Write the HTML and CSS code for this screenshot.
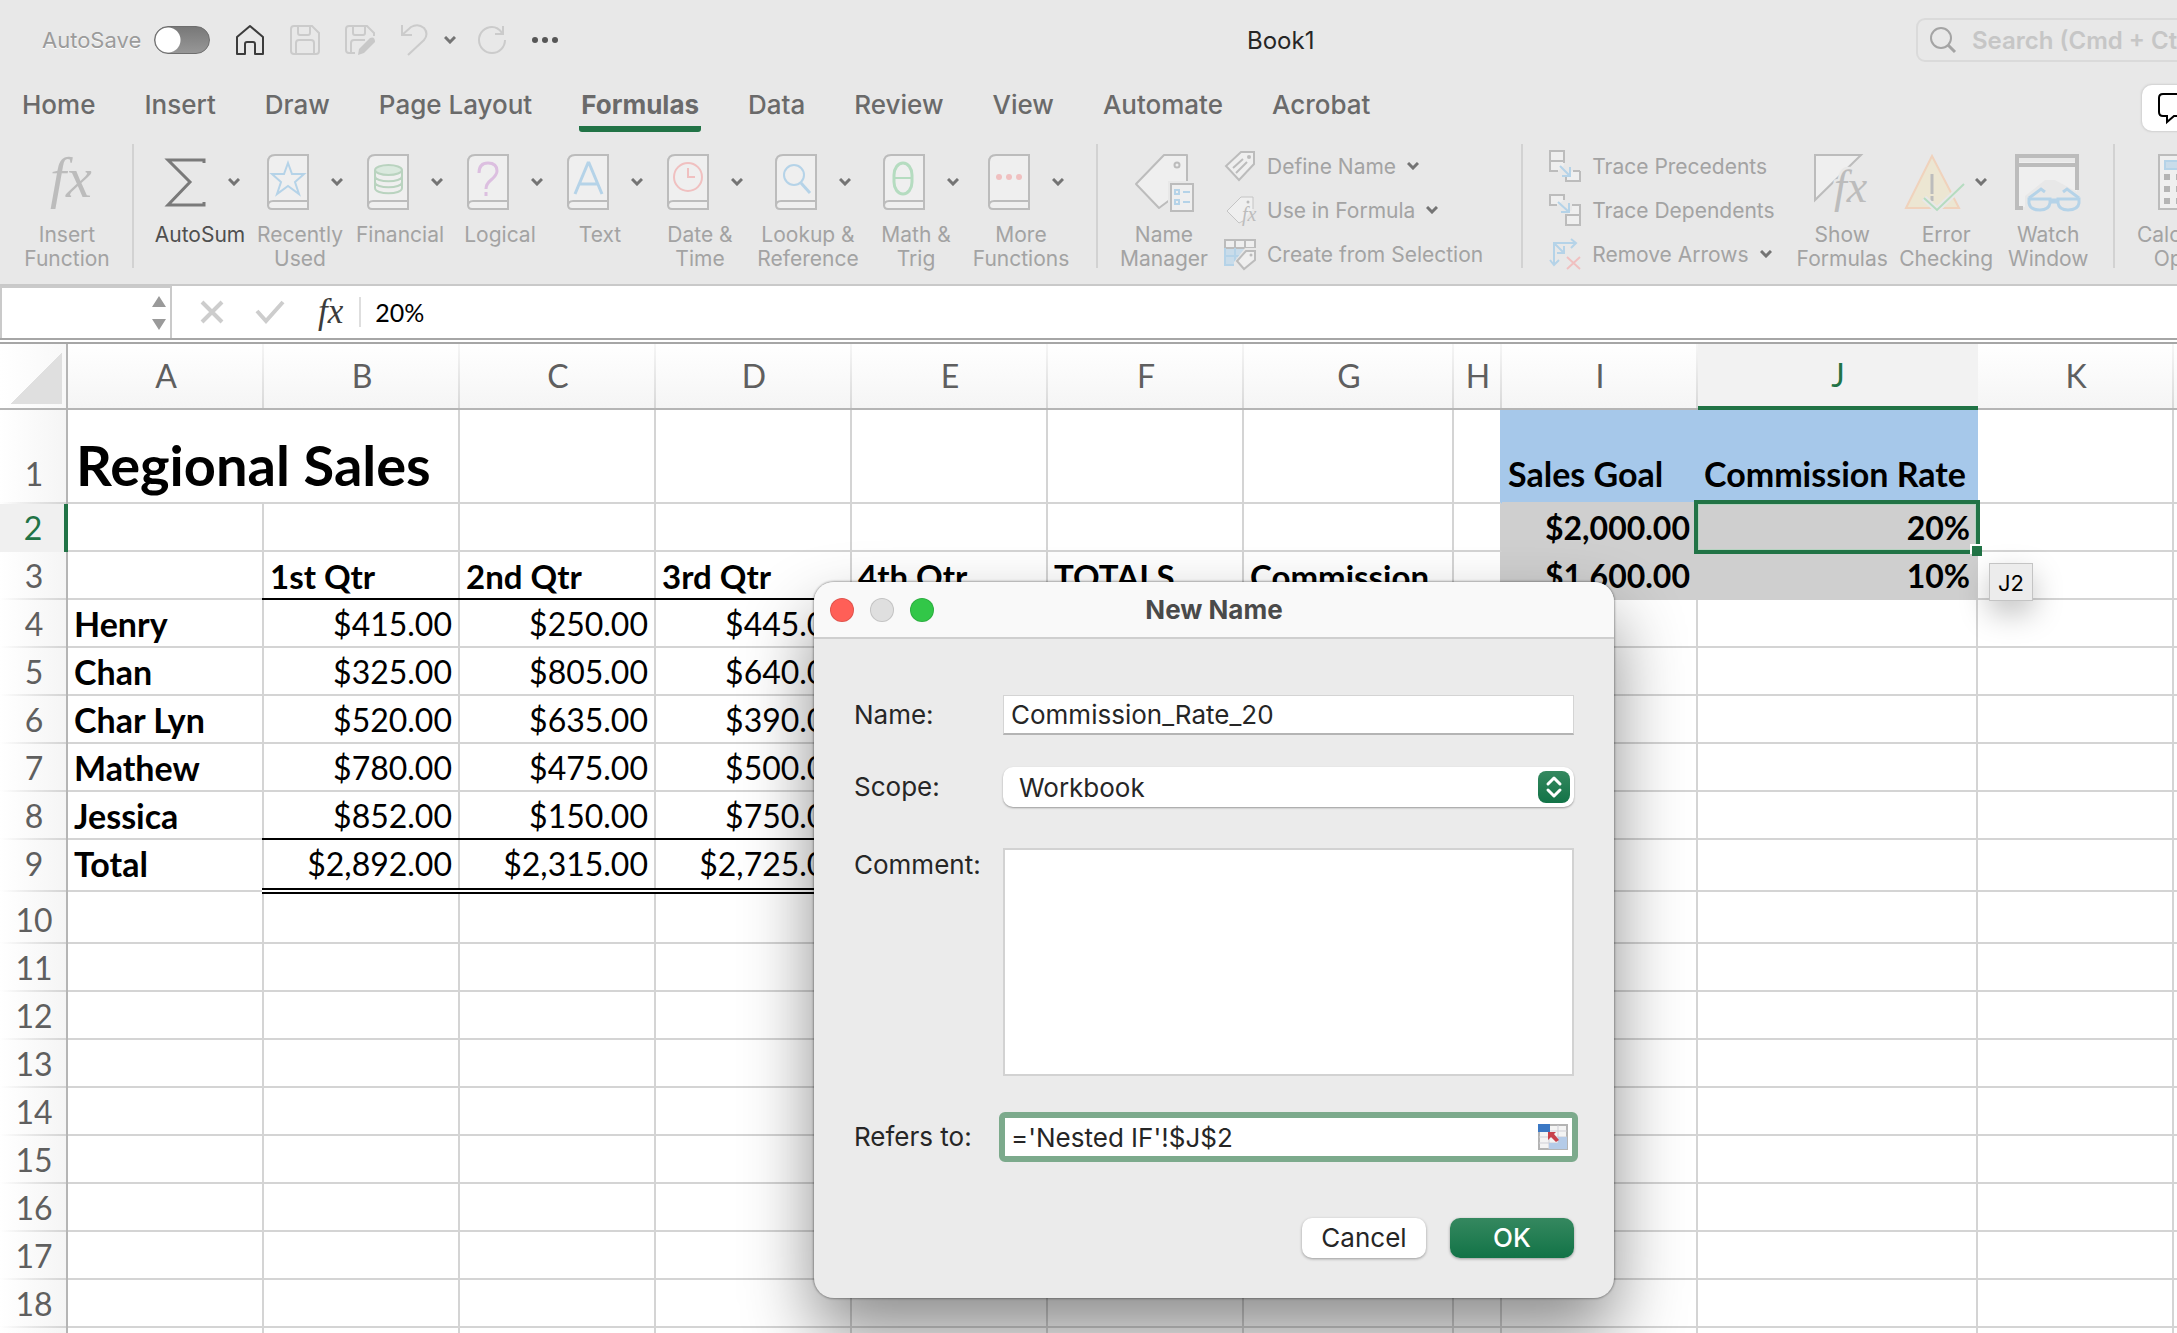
FILE: index.html
```html
<!DOCTYPE html>
<html lang="en">
<head>
    <meta charset="UTF-8">
    <meta name="viewport" content="width=device-width, initial-scale=1.0">
    <title>Book1</title>
    <link rel="stylesheet" href="styles.css">
</head>
<body>
    <svg class="defs" aria-hidden="true">
        <symbol id="book" viewBox="0 0 42 56">
            <path d="M41 1H8Q1 1 1 8V51Q1 55 5 55H41Z" fill="#efefef" stroke="#bcbcbc" stroke-width="2"/>
            <path d="M41 47H6Q1 47 1 52" fill="none" stroke="#bcbcbc" stroke-width="2"/>
        </symbol>
        <symbol id="chev" viewBox="0 0 12 8">
            <path d="M1 1L6 6L11 1" fill="none" stroke="#747474" stroke-width="3"/>
        </symbol>
    </svg>

    <header class="app-head">
        <div class="titlebar">
            <div class="quick">
                <label class="autosave" for="autosave">AutoSave</label>
                <input type="checkbox" id="autosave" class="toggle">
                <button class="icon-btn home" aria-label="Home"><svg width="30" height="32" viewBox="0 0 30 32"><path d="M2 30V13L15 2L28 13V30H20V20Q20 18 18 18H12Q10 18 10 20V30Z" fill="none" stroke="#3c3c3c" stroke-width="2" stroke-linejoin="round"/></svg></button>
                <button class="icon-btn" aria-label="Save"><svg width="30" height="30" viewBox="0 0 30 30"><path d="M4 1H22L29 8V26Q29 29 26 29H4Q1 29 1 26V4Q1 1 4 1ZM8 1V8Q8 10 10 10H18Q20 10 20 8V1M6 29V18Q6 15 9 15H21Q24 15 24 18V29" fill="none" stroke="#cbcbcb" stroke-width="2"/></svg></button>
                <button class="icon-btn" aria-label="Save As"><svg width="30" height="30" viewBox="0 0 30 30"><path d="M10 28H4Q1 28 1 25V4Q1 1 4 1H22L29 8V11M8 1V8Q8 10 10 10H18Q20 10 20 8V1M6 28V18Q6 15 9 15H20" fill="none" stroke="#cbcbcb" stroke-width="2"/><path d="M25 13Q30 11 30 17L19 28L13 30L14 24Z" fill="#c8c8c8"/></svg></button>
                <button class="icon-btn" aria-label="Undo"><svg width="30" height="32" viewBox="0 0 30 32"><path d="M2 1V11H12M2 11L11 3Q18 -1 24 4Q29 10 24 16L8 31" fill="none" stroke="#cbcbcb" stroke-width="2"/></svg></button>
                <button class="icon-btn tight" aria-label="Undo list"><svg width="12" height="8"><use href="#chev"/></svg></button>
                <button class="icon-btn" aria-label="Redo"><svg width="30" height="30" viewBox="0 0 30 30"><path d="M26 1V9H18M25 8Q21 2 15 2A13 13 0 1 0 28 15" fill="none" stroke="#cbcbcb" stroke-width="2"/></svg></button>
                <button class="icon-btn" aria-label="More"><svg width="26" height="8" viewBox="0 0 26 8"><circle cx="3" cy="4" r="3" fill="#555"/><circle cx="13" cy="4" r="3" fill="#555"/><circle cx="23" cy="4" r="3" fill="#555"/></svg></button>
            </div>
            <h1 class="doc-name">Book1</h1>
            <div class="search">
                <svg width="26" height="26" viewBox="0 0 26 26"><circle cx="11" cy="11" r="10" fill="none" stroke="#a4a4a4" stroke-width="2"/><path d="M18 18L25 25" stroke="#a4a4a4" stroke-width="3"/></svg>
                <input type="text" aria-label="Search" placeholder="Search (Cmd + Ctrl + U)">
            </div>
        </div>

        <nav class="tabs">
            <a href="#">Home</a>
            <a href="#">Insert</a>
            <a href="#">Draw</a>
            <a href="#">Page Layout</a>
            <a href="#" class="active">Formulas</a>
            <a href="#">Data</a>
            <a href="#">Review</a>
            <a href="#">View</a>
            <a href="#">Automate</a>
            <a href="#">Acrobat</a>
            <button class="comments" aria-label="Comments"><svg width="40" height="30" viewBox="0 0 40 30"><path d="M5 1H36Q39 1 39 4V20Q39 23 36 23H16L9 29V23H5Q1 23 1 19V5Q1 1 5 1Z" fill="none" stroke="#000" stroke-width="2"/></svg></button>
        </nav>

        <div class="ribbon">
            <div class="group first">
                <button class="big">
                    <span class="pic"><svg width="50" height="56" viewBox="0 0 50 56"><text x="8" y="43" class="fx-art" font-size="58">fx</text></svg></span>
                    <span class="cap">Insert<br>Function</span>
                </button>
            </div>
            <div class="group library">
                <button class="big drop on">
                    <span class="pic"><svg width="42" height="56" viewBox="0 0 42 56"><path d="M40 9V6H4L26 28L4 51H40V48" fill="none" stroke="#7a7a7a" stroke-width="3"/></svg><svg width="12" height="8"><use href="#chev"/></svg></span>
                    <span class="cap">AutoSum</span>
                </button>
                <button class="big drop">
                    <span class="pic"><svg width="42" height="56" viewBox="0 0 42 56"><use href="#book"/><path d="M21 9L25 20H37L28 28L32 40L21 32L10 40L14 28L5 20H17Z" fill="none" stroke="#b5d3e8" stroke-width="2"/></svg><svg width="12" height="8"><use href="#chev"/></svg></span>
                    <span class="cap">Recently<br>Used</span>
                </button>
                <button class="big drop">
                    <span class="pic"><svg width="42" height="56" viewBox="0 0 42 56"><use href="#book"/><path d="M8 16V34C8 41 35 41 35 34V16M8 22C8 29 35 29 35 22M8 28C8 35 35 35 35 28" fill="none" stroke="#b9d3bf" stroke-width="2"/><ellipse cx="21.500" cy="16" rx="13.500" ry="5" fill="#dae9de" stroke="#b9d3bf" stroke-width="2"/></svg><svg width="12" height="8"><use href="#chev"/></svg></span>
                    <span class="cap">Financial</span>
                </button>
                <button class="big drop">
                    <span class="pic"><svg width="42" height="56" viewBox="0 0 42 56"><use href="#book"/><path d="M12 19Q12 9 21 9Q30 9 30 17Q30 21 24 26Q19 30 19 35M19 38V42" fill="none" stroke="#dcbfe0" stroke-width="3"/></svg><svg width="12" height="8"><use href="#chev"/></svg></span>
                    <span class="cap">Logical</span>
                </button>
                <button class="big drop">
                    <span class="pic"><svg width="42" height="56" viewBox="0 0 42 56"><use href="#book"/><path d="M8 40L21 9H22L35 40M12 30H31" fill="none" stroke="#b5d3e8" stroke-width="3"/></svg><svg width="12" height="8"><use href="#chev"/></svg></span>
                    <span class="cap">Text</span>
                </button>
                <button class="big drop">
                    <span class="pic"><svg width="42" height="56" viewBox="0 0 42 56"><use href="#book"/><circle cx="21" cy="23" r="14" fill="none" stroke="#f0c0c0" stroke-width="2"/><path d="M21 14V23H28" fill="none" stroke="#f0c0c0" stroke-width="2"/></svg><svg width="12" height="8"><use href="#chev"/></svg></span>
                    <span class="cap">Date &amp;<br>Time</span>
                </button>
                <button class="big drop lookup">
                    <span class="pic"><svg width="42" height="56" viewBox="0 0 42 56"><use href="#book"/><circle cx="19" cy="21" r="10" fill="none" stroke="#b5d3e8" stroke-width="2"/><path d="M26 29L35 39" stroke="#b5d3e8" stroke-width="3"/></svg><svg width="12" height="8"><use href="#chev"/></svg></span>
                    <span class="cap">Lookup &amp;<br>Reference</span>
                </button>
                <button class="big drop">
                    <span class="pic"><svg width="42" height="56" viewBox="0 0 42 56"><use href="#book"/><rect x="11" y="9" width="18" height="31" rx="9" ry="12" fill="none" stroke="#b5dcc0" stroke-width="3"/><path d="M11 24H29" stroke="#b5dcc0" stroke-width="2"/></svg><svg width="12" height="8"><use href="#chev"/></svg></span>
                    <span class="cap">Math &amp;<br>Trig</span>
                </button>
                <button class="big drop more">
                    <span class="pic"><svg width="42" height="56" viewBox="0 0 42 56"><use href="#book"/><circle cx="11" cy="23" r="3" fill="#f0c0c0"/><circle cx="21" cy="23" r="3" fill="#f0c0c0"/><circle cx="31" cy="23" r="3" fill="#f0c0c0"/></svg><svg width="12" height="8"><use href="#chev"/></svg></span>
                    <span class="cap">More<br>Functions</span>
                </button>
            </div>
            <div class="group names">
                <button class="big">
                    <span class="pic"><svg width="60" height="60" viewBox="0 0 60 60"><path d="M30 3H53V35L25 56L2 32Z" fill="#efefef" stroke="#bcbcbc" stroke-width="2" stroke-linejoin="round"/><circle cx="43" cy="13" r="2.500" fill="none" stroke="#bcbcbc" stroke-width="2"/><rect x="34" y="29" width="26" height="31" fill="#e8e8e8"/><rect x="37" y="32" width="22" height="27" fill="#efefef" stroke="#bcbcbc" stroke-width="2"/><path d="M41 38H45V42H41ZM41 48H45V52H41ZM49 40H56M49 50H56" fill="none" stroke="#b5d3e8" stroke-width="2"/></svg></span>
                    <span class="cap">Name<br>Manager</span>
                </button>
                <div class="stack">
                    <button class="small"><svg width="32" height="32" viewBox="0 0 32 32"><path d="M17 2H30V14L15 30L2 16Z" fill="#efefef" stroke="#bcbcbc" stroke-width="2"/><path d="M9 18L19 9M12 23L23 12" stroke="#bcbcbc" stroke-width="2"/><circle cx="25" cy="7" r="2" fill="#bcbcbc"/></svg>Define Name<svg width="12" height="8"><use href="#chev"/></svg></button>
                    <button class="small"><svg width="32" height="32" viewBox="0 0 32 32"><path d="M19 27L15 29L3 17L17 3H29V15" fill="#efefef" stroke="#c4c4c4" stroke-width="1"/><circle cx="24" cy="8" r="1.500" fill="#bcbcbc"/><text x="18" y="27" class="fx-art" font-size="20">fx</text></svg>Use in Formula<svg width="12" height="8"><use href="#chev"/></svg></button>
                    <button class="small"><svg width="32" height="32" viewBox="0 0 32 32"><rect x="1" y="2" width="30" height="25" fill="#efefef"/><path d="M1 10H20V27H1Z" fill="#c9dcea"/><path d="M1 10V2H31V12M11 2V10M21 2V10M1 10H31" fill="none" stroke="#bcbcbc" stroke-width="2"/><path d="M1 10V27H13M1 18H18M11 10V27" fill="none" stroke="#b5d3e8" stroke-width="2"/><path d="M21 10H32V32H10V24Z" fill="#e8e8e8"/><path d="M22 13H31V22L20 31L13 23Z" fill="#efefef" stroke="#bcbcbc" stroke-width="2"/><circle cx="27" cy="17" r="1.500" fill="#bcbcbc"/></svg>Create from Selection</button>
                </div>
            </div>
            <div class="group audit">
                <div class="stack">
                    <button class="small"><svg width="32" height="32" viewBox="0 0 32 32"><path d="M1 1H15V11H1ZM1 11V21H9L15 15V11M31 21V31H17V27L23 21Z" fill="#efefef"/><path d="M1 1H15V11H1ZM1 11V21H9M31 21V31H17V27M24 21H31M15 11V13" fill="none" stroke="#bcbcbc" stroke-width="2"/><path d="M11 16L21 26M21 17V26H13" fill="none" stroke="#b5d3e8" stroke-width="2"/></svg>Trace Precedents</button>
                    <button class="small"><svg width="32" height="32" viewBox="0 0 32 32"><path d="M1 1H15V6L8 11H1ZM23 11H31V31H17V21L23 16Z" fill="#efefef"/><path d="M8 11H1V1H15V6M17 21H31V31H17ZM23 11H31V21" fill="none" stroke="#bcbcbc" stroke-width="2"/><path d="M9 8L20 18M20 9V18H12" fill="none" stroke="#b5d3e8" stroke-width="2"/></svg>Trace Dependents</button>
                    <button class="small"><svg width="32" height="32" viewBox="0 0 32 32"><path d="M5 27V5H26M22 1L27 5L22 10M1 22L5 27L10 22M6 6L15 15M15 8V15H8" fill="none" stroke="#b5d3e8" stroke-width="2"/><path d="M18 19L31 31M31 19L18 31" stroke="#f0c0c0" stroke-width="2"/></svg>Remove Arrows<svg width="12" height="8"><use href="#chev"/></svg></button>
                </div>
                <button class="big show">
                    <span class="pic"><svg width="56" height="60" viewBox="0 0 56 60"><path d="M1 3H47L1 48Z" fill="#efefef" stroke="#bcbcbc" stroke-width="2"/><text x="20" y="50" class="fx-art halo" font-size="46">fx</text></svg></span>
                    <span class="cap">Show<br>Formulas</span>
                </button>
                <button class="big drop error">
                    <span class="pic"><svg width="60" height="60" viewBox="0 0 60 60"><path d="M27 4L54 56H1Z" fill="#ece6d2" stroke="#f0d2bc" stroke-width="2"/><path d="M27 22V42M27 44V49" stroke="#bcbcbc" stroke-width="3"/><path d="M19 46L32 58L59 32" fill="none" stroke="#e8e8e8" stroke-width="6"/><path d="M19 46L32 58L59 32" fill="none" stroke="#b5dcc0" stroke-width="2"/></svg><svg width="12" height="8"><use href="#chev"/></svg></span>
                    <span class="cap">Error<br>Checking</span>
                </button>
                <button class="big watch">
                    <span class="pic"><svg width="66" height="60" viewBox="0 0 66 60"><path d="M2 10H62V55H2Z" fill="#efefef"/><path d="M8 56H2V4H62V38M2 13H62" fill="none" stroke="#bcbcbc" stroke-width="4"/><path d="M10 60V44L30 28H40L66 42V60Z" fill="#e8e8e8"/><path d="M14 46L26 37L30 40M64 46L52 37L48 40" fill="none" stroke="#b5d3e8" stroke-width="3"/><path d="M14 47H35V51Q34 58 25 58Q15 58 14 51ZM43 47H64V51Q63 58 53 58Q44 58 43 51Z" fill="#e8e8e8" stroke="#b5d3e8" stroke-width="3"/><path d="M35 49H43" stroke="#b5d3e8" stroke-width="5"/></svg></span>
                    <span class="cap">Watch<br>Window</span>
                </button>
            </div>
            <div class="group calc">
                <button class="big drop">
                    <span class="pic"><svg width="44" height="56" viewBox="0 0 44 56"><rect x="1" y="1" width="42" height="54" fill="#efefef" stroke="#bcbcbc" stroke-width="2"/><rect x="7" y="7" width="30" height="8" fill="#c9dcea" stroke="#b5d3e8" stroke-width="2"/><path d="M6 23H12M18 23H24M30 23H36M6 35H12M18 35H24M30 35H36M6 47H12M18 47H24M30 47H36" stroke="#b4b4b4" stroke-width="6"/></svg><svg width="12" height="8"><use href="#chev"/></svg></span>
                    <span class="cap">Calculation<br>Options</span>
                </button>
            </div>
        </div>
    </header>

    <div class="formula-bar">
        <div class="name-box">
            <input type="text" aria-label="Name box">
            <svg width="14" height="34" viewBox="0 0 14 34"><path d="M7 0L14 11H0ZM7 34L14 23H0Z" fill="#9a9a9a"/></svg>
        </div>
        <button class="icon-btn" aria-label="Cancel entry"><svg width="24" height="24" viewBox="0 0 24 24"><path d="M2 2L22 22M22 2L2 22" stroke="#cdcdcd" stroke-width="4"/></svg></button>
        <button class="icon-btn" aria-label="Accept entry"><svg width="28" height="24" viewBox="0 0 28 24"><path d="M1 11L10 21L27 2" fill="none" stroke="#cdcdcd" stroke-width="4"/></svg></button>
        <button class="icon-btn fx">fx</button>
        <input type="text" class="formula" aria-label="Formula" value="20%">
    </div>

    <main class="sheet">
        <table id="grid"></table>
        <div class="cell-tip">J2</div>
    </main>

    <form class="dialog" role="dialog" aria-labelledby="dlg-title">
        <div class="dlg-head">
            <span class="light red"></span>
            <span class="light off"></span>
            <span class="light green"></span>
            <h2 id="dlg-title">New Name</h2>
        </div>
        <div class="dlg-body">
            <label for="nm">Name:</label>
            <input type="text" id="nm" class="field" value="Commission_Rate_20">

            <label for="scope">Scope:</label>
            <div class="pick">
                <select id="scope">
                    <option>Workbook</option>
                </select>
                <svg class="knob" width="32" height="32" viewBox="0 0 32 32"><path d="M10 13L16 7L22 13M10 19L16 25L22 19" fill="none" stroke="#fff" stroke-width="3" stroke-linecap="round" stroke-linejoin="round"/></svg>
            </div>

            <label for="comment" class="top">Comment:</label>
            <textarea id="comment"></textarea>

            <label for="refers">Refers to:</label>
            <div class="refers">
                <input type="text" id="refers" value="='Nested IF'!$J$2">
                <svg width="30" height="26" viewBox="0 0 30 26"><rect x="1" y="1" width="28" height="24" fill="#f4f4f4" stroke="#b4b4b4" stroke-width="2"/><path d="M1 13H29M1 19H29M11 1V25M20 1V25M1 7H29" stroke="#cfcfd6" stroke-width="1"/><rect width="12" height="8" fill="#3b78c4"/><path d="M11 19H20V13H29V25H11Z" fill="#b4cbe8"/><path d="M10 8H18L16 10L21 16L18 18L13 13L10 16Z" fill="#c8404a"/></svg>
            </div>
        </div>
        <div class="dlg-foot">
            <button type="button" class="btn">Cancel</button>
            <button type="button" class="btn ok">OK</button>
        </div>
    </form>

    <script>
        const cols = "ABCDEFGHIJKL".split("");
        const grid = document.getElementById("grid");

        const cells = {
            A1: "Regional Sales", I1: "Sales Goal", J1: "Commission Rate",
            I2: "$2,000.00", J2: "20%",
            B3: "1st Qtr", C3: "2nd Qtr", D3: "3rd Qtr", E3: "4th Qtr", F3: "TOTALS", G3: "Commission",
            I3: "$1,600.00", J3: "10%",
            A4: "Henry", B4: "$415.00", C4: "$250.00", D4: "$445.00",
            A5: "Chan", B5: "$325.00", C5: "$805.00", D5: "$640.00",
            A6: "Char Lyn", B6: "$520.00", C6: "$635.00", D6: "$390.00",
            A7: "Mathew", B7: "$780.00", C7: "$475.00", D7: "$500.00",
            A8: "Jessica", B8: "$852.00", C8: "$150.00", D8: "$750.00",
            A9: "Total", B9: "$2,892.00", C9: "$2,315.00", D9: "$2,725.00"
        };

        function addCell(row, tag, text, classes) {
            const cell = document.createElement(tag);
            cell.textContent = text;
            cell.className = classes.join(" ");
            row.appendChild(cell);
            return cell;
        }

        function addHeader() {
            const row = grid.insertRow();
            row.className = "letters";
            addCell(row, "th", "", ["corner"]);
            cols.forEach(function (c) {
                addCell(row, "th", c, ["col-" + c]);
            });
        }

        function addRow(n) {
            const row = grid.insertRow();
            row.className = "r" + n;
            addCell(row, "th", n, ["num"]);
            cols.forEach(function (c) {
                if (n === 1 && c === "B") return; // the title runs over A and B
                const text = cells[c + n] || "";
                const classes = [];
                if (/^[$\d].*[\d%]$/.test(text)) classes.push("right");
                if (c === "A" || n === 1) classes.push("label");
                if (n === 3 && c < "H") classes.push("heading");
                if ((c === "I" || c === "J") && n < 4) classes.push("bold", n === 1 ? "blue" : "gray");
                if (c === "H" && n < 4) classes.push(n === 1 ? "edge-blue" : "edge-gray");
                if (c > "A" && c < "H") {
                    if (n === 3 || n === 8) classes.push("rule");
                    if (n === 9) classes.push("total");
                }
                const cell = addCell(row, "td", text, classes);
                if (n === 1 && c === "A") {
                    cell.colSpan = 2;
                    cell.classList.add("title");
                }
                if (n === 2 && c === "J") cell.classList.add("selected");
            });
        }

        addHeader();
        for (let n = 1; n <= 19; n++) addRow(n);
    </script>
</body>
</html>
```
FILE: styles.css
```css
*, *::before, *::after {
    box-sizing: border-box;
}
body {
    margin: 0;
    height: 100vh;
    overflow: hidden;
    position: relative;
    display: flex;
    flex-direction: column;
    background-color: white;
    font-family: Inter, "Liberation Sans", sans-serif;
    color: #262626;
}
button, input, select, textarea {
    font: inherit;
    color: inherit;
    padding: 0;
    border: none;
    background: none;
}
svg {
    display: block;
    flex: none;
    overflow: visible;
}
.defs {
    position: absolute;
    width: 0;
    height: 0;
}
.fx-art {
    font-family: "Liberation Serif", serif;
    font-style: italic;
    fill: #bcbcbc;
}
.halo {
    stroke: #e8e8e8;
    stroke-width: 5px;
    paint-order: stroke;
}

/* title bar */
.app-head {
    flex: none;
    overflow: hidden;
    background-color: #e8e8e8;
    border-bottom: 2px solid #c9c9c9;
}
.titlebar {
    display: grid;
    grid-template-columns: minmax(0, 1247fr) minmax(0, 669fr) minmax(0, 261fr);
    align-items: center;
    height: 80px;
}
.quick {
    display: flex;
    align-items: center;
    gap: 25px;
    padding-left: 42px;
}
.autosave {
    font-size: 22px;
    color: #9b9b9b;
    text-shadow: 0 1px white;
    margin-right: -12px;
}
.toggle {
    appearance: none;
    margin: 0;
    width: 56px;
    height: 28px;
    border-radius: 14px;
    border: 1px solid #6e6e6e;
    background: radial-gradient(circle at 13px 13px, white 12px, transparent 13px), linear-gradient(#787878, #979797);
}
.icon-btn {
    display: block;
}
.tight {
    margin: 0 -4px 0 -11px;
}
.doc-name {
    margin: 0;
    font-size: 24px;
    font-weight: 400;
}
.search {
    display: flex;
    align-items: center;
    gap: 16px;
    width: 400px;
    height: 44px;
    padding-left: 12px;
    border: 2px solid #dadada;
    border-radius: 9px;
}
.search input {
    flex: 1;
    font-size: 24px;
    font-weight: 600;
}
.search input::placeholder {
    color: #c6c6c6;
    opacity: 1;
}

/* tabs */
.tabs {
    display: flex;
    gap: 45px;
    height: 64px;
    padding: 10px 0 12px 20px;
}
.tabs a {
    flex: none;
    padding: 0 2px;
    font-size: 26px;
    font-weight: 500;
    line-height: 30px;
    color: #6a6a6a;
    text-decoration: none;
}
.tabs .active {
    font-weight: 700;
    border-bottom: 6px solid #217346;
    border-radius: 3px;
}
.comments {
    flex: none;
    width: 140px;
    height: 46px;
    margin: -5px -105px 0 auto;
    padding-left: 16px;
    border-radius: 10px;
    background-color: white;
    box-shadow: 0 0 2px 1px #d0d0d0;
}

/* ribbon */
.ribbon {
    display: flex;
    padding-bottom: 16px;
    overflow: hidden;
}
.group {
    display: flex;
    flex: none;
    align-items: flex-start;
    height: 124px;
    border-right: 2px solid #d2d2d2;
}
.first {
    width: 134px;
}
.library {
    padding: 0 20px 0 16px;
}
.big {
    flex: none;
    width: 100px;
    padding-top: 10px;
    font-size: 21px;
    line-height: 24px;
    color: #a3a3a3;
}
.first .big {
    width: 134px;
}
.on {
    color: #4f4f4f;
}
.pic {
    display: flex;
    justify-content: center;
    align-items: center;
    gap: 22px;
    height: 56px;
    margin-bottom: 13px;
}
.drop .pic {
    padding-left: 10px;
}
.on .pic {
    padding-left: 4px;
}
.cap {
    display: block;
    height: 48px;
    white-space: nowrap;
}
.lookup {
    width: 116px;
}
.more {
    width: 110px;
}
.names {
    padding: 0 38px 0 16px;
}
.stack {
    display: flex;
    flex-direction: column;
}
.small {
    display: flex;
    align-items: center;
    gap: 11px;
    height: 44px;
    font-size: 21px;
    color: #a3a3a3;
}
.names .stack {
    margin-left: 10px;
}
.audit {
    padding: 0 15px 0 26px;
}
.audit .small {
    width: 241px;
}
.show, .error {
    width: 104px;
}
.error .pic {
    gap: 10px;
    padding-left: 0;
}
.calc .big {
    width: 154px;
}

/* formula bar */
.formula-bar {
    flex: none;
    display: flex;
    align-items: center;
    gap: 32px;
    height: 58px;
    border-bottom: 6px double #a6a6a6;
}
.name-box {
    display: flex;
    align-items: center;
    width: 172px;
    height: 52px;
    padding-right: 4px;
    margin-right: -4px;
    border: 2px solid #cacaca;
    border-bottom: none;
}
.name-box input {
    flex: 1;
    min-width: 0;
}
.fx {
    margin-left: 2px;
    font-family: "Liberation Serif", serif;
    font-style: italic;
    font-size: 35px;
    line-height: 34px;
    color: #3c3c3c;
}
.formula {
    flex: 1;
    height: 30px;
    margin-left: -16px;
    padding-left: 14px;
    border-left: 2px solid #dedede;
    font-family: Lato, sans-serif;
    font-size: 25px;
    color: black;
}

/* worksheet */
.sheet {
    flex: 1;
    position: relative;
    overflow: hidden;
    font-family: Lato, sans-serif;
    font-size: 32px;
    color: black;
}
table {
    table-layout: fixed;
    width: 2370px;
    border-spacing: 0;
}
th, td {
    padding: 0 6px 2px;
    height: 48px;
    line-height: 40px;
    vertical-align: bottom;
    white-space: nowrap;
    text-align: left;
    font-weight: 400;
    border-right: 2px solid #d4d4d4;
    border-bottom: 2px solid #d4d4d4;
}
th {
    text-align: center;
    color: #5f5f5f;
}
.letters th {
    width: 196px;
    height: 66px;
    padding: 0;
    vertical-align: middle;
    border-right: none;
    border-bottom-color: #b5b5b5;
    background: linear-gradient(#f6f6f6, #d8d8d8) right / 2px 100% no-repeat, linear-gradient(white, #f5f5f5);
}
.letters .corner {
    width: 68px;
    border-right: 2px solid #b5b5b5;
    background: linear-gradient(to bottom right, transparent 50%, #dfdfdf 50%) 10px 8px / 52px 52px no-repeat, linear-gradient(to right, white, #f8f8f8);
}
.letters .col-G {
    width: 210px;
}
.letters .col-H {
    width: 48px;
}
.letters .col-J {
    width: 280px;
    color: #217346;
    background: #f2f2f2;
    border-bottom: 4px solid #217346;
}
.num {
    padding: 0 0 4px 2px;
    border-right-color: #b5b5b5;
    border-bottom: none;
    background: linear-gradient(to right, transparent, #d4d4d4) bottom / 100% 2px no-repeat, linear-gradient(to right, white, #f5f5f5);
}
.r1 th, .r1 td {
    height: 94px;
    padding-bottom: 8px;
}
.r1 th {
    padding-bottom: 10px;
}
.r2 .num {
    color: #217346;
    border-right: 4px solid #217346;
    background: #f0f0f0;
}
.r9 th, .r9 td {
    height: 52px;
    padding-bottom: 6px;
}
.r9 th {
    padding-bottom: 8px;
}
.r10 th, .r10 td {
    height: 52px;
}
.bold {
    font-weight: 700;
}
.label {
    font-size: 34px;
    font-weight: 700;
}
.heading {
    font-size: 33px;
    font-weight: 700;
}
.right {
    text-align: right;
}
.r1 .title {
    padding-left: 8px;
    font-size: 56px;
    line-height: 58px;
}
td.blue {
    background-color: #a6c8ea;
    border-color: #a6c8ea;
    border-bottom-color: #cfcfcf;
}
td.gray {
    background-color: #cfcfcf;
    border-color: #cfcfcf;
}
td.edge-blue {
    border-right-color: #a6c8ea;
}
td.edge-gray {
    border-right-color: #cfcfcf;
}
/* black rules lie over the grid lines */
.rule, .total {
    position: relative;
}
.rule::after, .total::after {
    content: "";
    position: absolute;
    left: -2px;
    right: -2px;
    bottom: -2px;
    height: 2px;
    background-color: black;
}
.total::after {
    bottom: -4px;
    height: 6px;
    background-color: white;
    border: solid black;
    border-width: 2px 0;
}
.selected {
    position: relative;
}
.selected::before {
    content: "";
    position: absolute;
    inset: -4px;
    border: 4px solid #217346;
    box-shadow: inset 0 0 0 1px #b5d3c0;
}
.selected::after {
    content: "";
    position: absolute;
    right: -6px;
    bottom: -6px;
    width: 10px;
    height: 10px;
    background-color: #217346;
    box-shadow: -2px -2px white;
}
.cell-tip {
    position: absolute;
    left: 1989px;
    top: 219px;
    width: 44px;
    height: 38px;
    background-color: #ececec;
    border: 1px solid #c4c4c4;
    box-shadow: 0 12px 30px rgba(0, 0, 0, 0.25);
    font-family: Inter, sans-serif;
    font-size: 22px;
    line-height: 38px;
    text-align: center;
}

/* new name dialog */
.dialog {
    position: absolute;
    left: 814px;
    top: 582px;
    width: 800px;
    border-radius: 20px;
    background-color: #ebebeb;
    box-shadow: 0 0 2px 1px rgba(0, 0, 0, 0.3), 0 36px 70px rgba(0, 0, 0, 0.45);
    font-size: 26px;
}
.dlg-head {
    display: flex;
    align-items: center;
    gap: 16px;
    height: 57px;
    padding: 0 16px;
    border-radius: 20px 20px 0 0;
    border-bottom: 2px solid #cfcfcf;
    background-color: #f9f9f9;
}
.light {
    width: 24px;
    height: 24px;
    border-radius: 50%;
    border: 1px solid rgba(0, 0, 0, 0.12);
}
.red {
    background-color: #ff5f57;
}
.off {
    background-color: #dfdfdf;
}
.green {
    background-color: #32c748;
}
.dlg-head h2 {
    flex: 1;
    margin: 0 120px 0 0;
    font-size: 26px;
    line-height: 30px;
    font-weight: 700;
    text-align: center;
    color: #4a4a4a;
}
.dlg-body {
    display: grid;
    grid-template-columns: 149px 1fr;
    align-items: center;
    padding: 56px 40px 0;
}
.field {
    height: 40px;
    padding-left: 7px;
    margin-bottom: 32px;
    border: 1px solid #d4d4d4;
    border-bottom: 2px solid #b4b4b4;
    background-color: white;
}
.dlg-body label {
    height: 40px;
    line-height: 40px;
    align-self: start;
}
.pick {
    position: relative;
    height: 40px;
    margin-bottom: 41px;
}
.pick select {
    appearance: none;
    width: 100%;
    height: 40px;
    padding-left: 16px;
    border-radius: 10px;
    background-color: white;
    box-shadow: 0 1px 2px rgba(0, 0, 0, 0.35);
}
.knob {
    position: absolute;
    right: 4px;
    top: 4px;
    border-radius: 8px;
    background: linear-gradient(#35885f, #127347);
}
.dlg-body .top {
    line-height: 34px;
}
textarea {
    height: 228px;
    margin-bottom: 36px;
    border: 2px solid #d2d2d2;
    background-color: white;
    resize: none;
}
.dlg-body .refers {
    display: flex;
    align-items: center;
    height: 50px;
    margin: 0 -4px;
    padding-right: 4px;
    border: 6px solid #7caa8c;
    border-radius: 6px;
    background-color: white;
}
.refers input {
    flex: 1;
    padding-left: 6px;
    outline: none;
}
.dlg-body label[for="refers"] {
    line-height: 50px;
}
.dlg-foot {
    display: flex;
    justify-content: flex-end;
    gap: 24px;
    padding: 56px 40px 40px;
}
.btn {
    width: 124px;
    height: 40px;
    border-radius: 10px;
    line-height: 38px;
    background-color: white;
    box-shadow: 0 1px 3px rgba(0, 0, 0, 0.35);
}
.ok {
    color: white;
    font-weight: 500;
    background: linear-gradient(#35885f, #127347);
}
```
